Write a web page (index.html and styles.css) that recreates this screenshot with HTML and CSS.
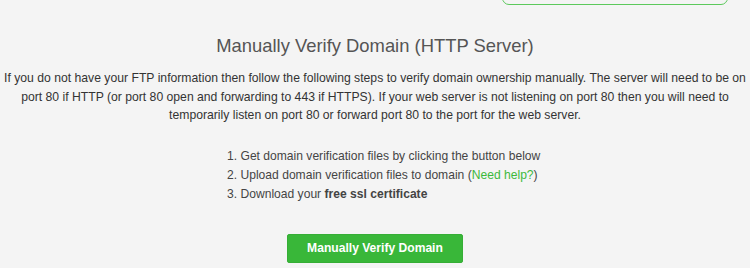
FILE: index.html
```html
<!DOCTYPE html>
<html lang="en">
<head>
  <meta charset="UTF-8" />
  <title>Manually Verify Domain</title>
  <link rel="stylesheet" href="styles.css">
</head>
<body>
  <div class="top-row">
    <div class="top-box"></div>
  </div>

  <section class="verify">
    <h2>Manually Verify Domain (HTTP Server)</h2>
    <p class="intro">If you do not have your FTP information then follow the following steps to verify domain ownership manually. The server will need to be on port 80 if HTTP (or port 80 open and forwarding to 443 if HTTPS). If your web server is not listening on port 80 then you will need to temporarily listen on port 80 or forward port 80 to the port for the web server.</p>

    <ol class="steps">
      <li>Get domain verification files by clicking the button below</li>
      <li>Upload domain verification files to domain (<a href="#">Need help?</a>)</li>
      <li>Download your <strong>free ssl certificate</strong></li>
    </ol>

    <div class="actions">
      <button type="button">Manually Verify Domain</button>
    </div>
  </section>
</body>
</html>
```

FILE: styles.css
```css
body {
  margin: 0;
  font-family: 'Liberation Sans', Arial, sans-serif;
  background-color: #f4f4f4;
  color: #333;
  overflow: hidden;
}
.top-row {
  display: flex;
  justify-content: flex-end;
  padding-right: 22px;
}
.top-box {
  width: 224px;
  height: 20px;
  margin-top: -17px;
  border: 1px solid #5cc95c;
  border-radius: 7px;
  background: #f4f4f4;
}
.verify {
  text-align: center;
}
.verify h2 {
  margin: 30px 0 0;
  font-size: 18.4px;
  font-weight: normal;
  color: #555;
  line-height: 22px;
}
.intro {
  margin: 12px 0 0;
  font-size: 12.2px;
  line-height: 18.5px;
}
.steps {
  margin: 22px 0 0;
  padding-left: 227px;
  list-style: none;
  counter-reset: step;
  text-align: left;
  font-size: 12.1px;
  color: #444;
}
.steps li {
  counter-increment: step;
  line-height: 19px;
}
.steps li::before {
  content: counter(step) ". ";
}
.steps a {
  color: #3cb93c;
  text-decoration: none;
}
.actions {
  margin-top: 30px;
}
button {
  width: 176px;
  height: 29px;
  background: #39b739;
  color: #fff;
  border: 1px solid #36ae36;
  border-radius: 2px;
  font-family: inherit;
  font-size: 12.1px;
  font-weight: bold;
  cursor: pointer;
}
```
